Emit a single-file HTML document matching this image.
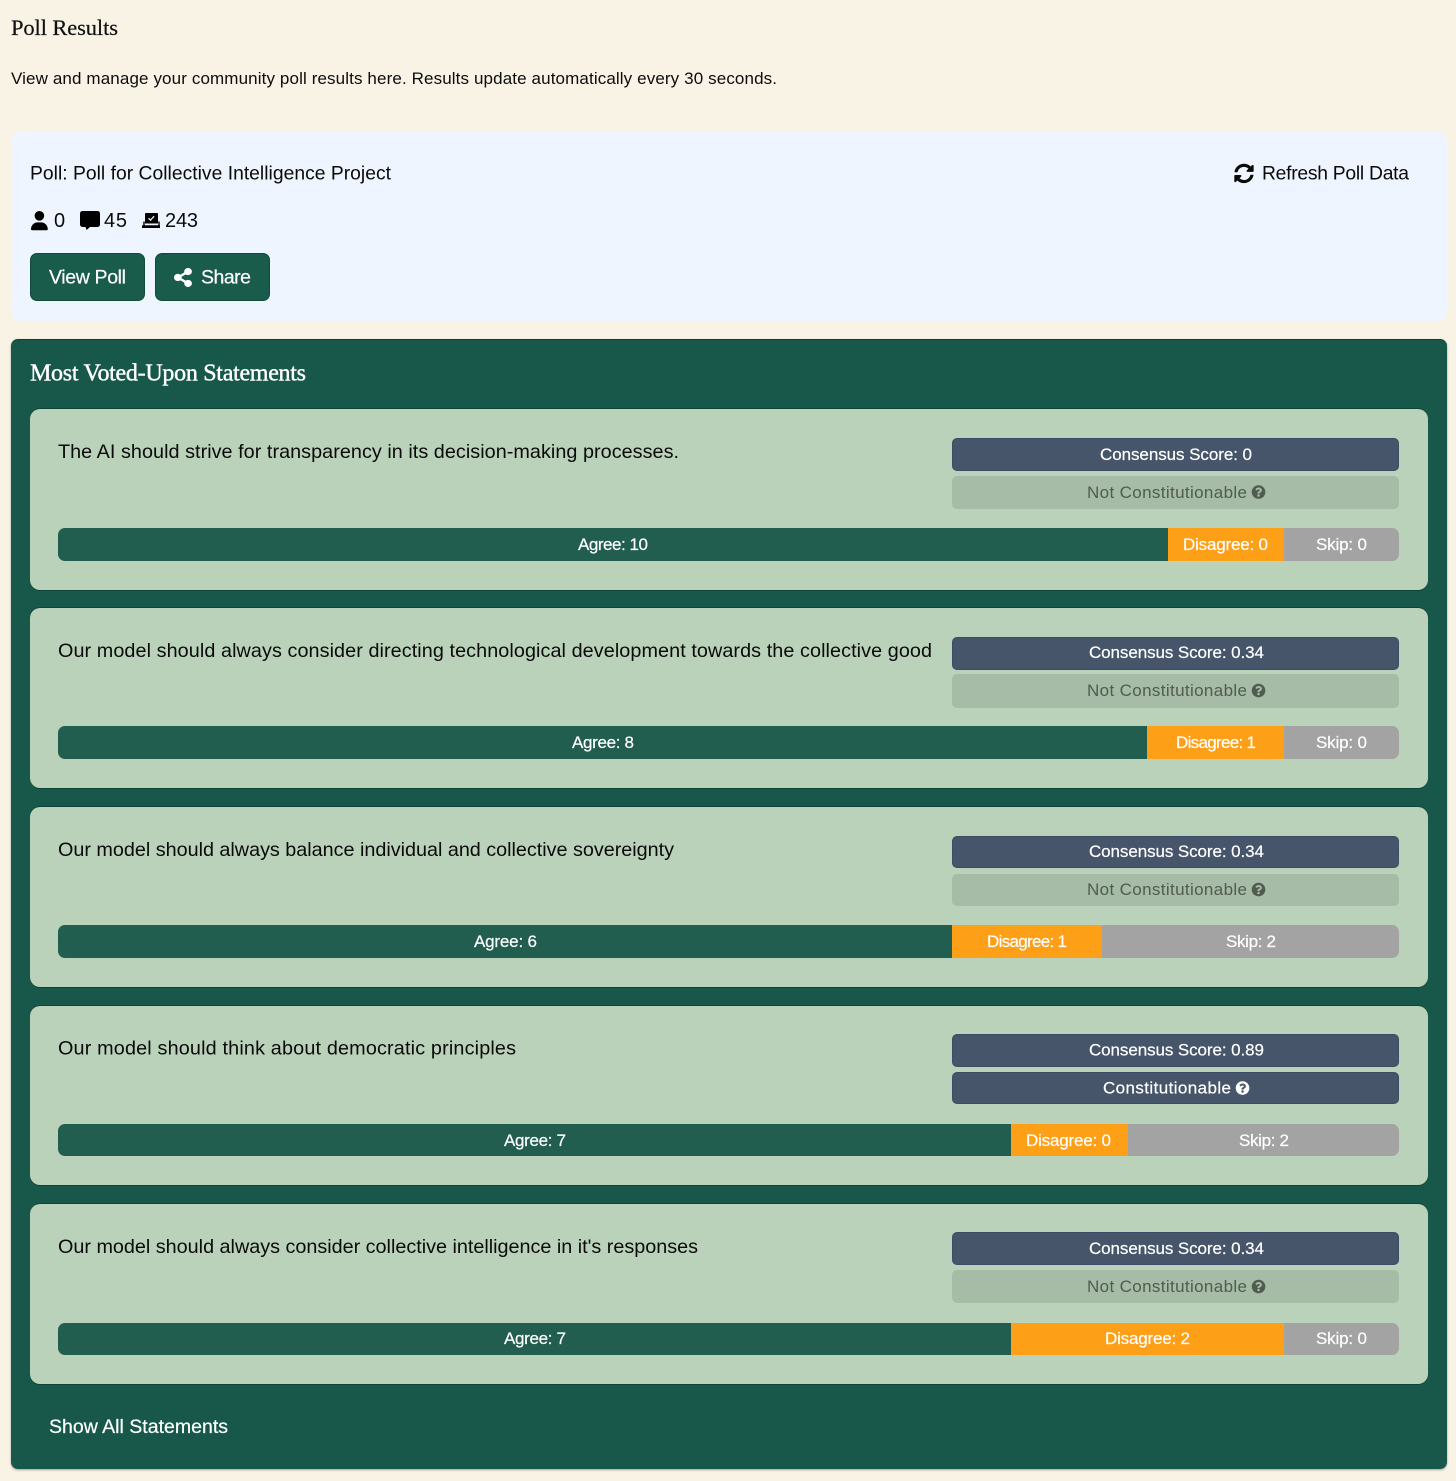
<!DOCTYPE html>
<html lang="en">
<head>
<meta charset="utf-8">
<title>Poll Results</title>
<style>
html,body{margin:0;padding:0;background:#f9f3e6;}
body{position:relative;width:1456px;height:1481px;overflow:hidden;font-family:"Liberation Sans",sans-serif;}
.b{position:absolute;box-sizing:border-box;}
.panel{left:11px;top:131px;width:1436px;height:190px;background:#eef5ff;border-radius:10px;}
.btn{top:253px;height:48px;background:#1a5c4c;border:1px solid #0f4a3a;border-radius:7px;}
.main{left:11px;top:339px;width:1436px;height:1130px;background:#18584a;border-radius:7px;box-shadow:0 1px 2px rgba(0,0,0,.35);border-top:1px solid #0d4035;}
.card{left:30px;width:1398px;background:#bad2b9;border-radius:10px;box-shadow:0 -1px 0 #0e4437,0 1px 0 #0e4437;}
.pill{left:952px;width:447px;background:#465569;border:1px solid #3d4c66;border-radius:5px;}
.off{background:#a6bca7;border-color:#a6bca7;}
.bar{left:58px;width:1341px;border-radius:7px;overflow:hidden;display:flex;}
.bar i{display:block;height:100%;}
.a{background:#225e50;}.d{background:#fe9f18;}.s{background:#a3a3a3;flex:1;}
svg.o{position:absolute;left:0;top:0;}
text{font-family:"Liberation Sans",sans-serif;}
.srf{font-family:"Liberation Serif",serif;}
.t17{font-size:17px;fill:#0c0c0c;}
.t19{font-size:19.3px;fill:#0a0a0a;}
.st{font-size:19.8px;fill:#0a0a0a;}
.num{font-size:20px;fill:#0a0a0a;}
.w{font-size:17px;fill:#fff;stroke:#fff;stroke-width:.2px;}
.m{font-size:17px;fill:#4f5c4f;}
.w19{font-size:19.5px;fill:#fff;stroke:#fff;stroke-width:.2px;}
</style>
</head>
<body>
<div class="b panel"></div>
<div class="b btn" style="left:30px;width:115px"></div>
<div class="b btn" style="left:155px;width:115px"></div>
<div class="b main"></div>

<div class="b card" style="top:409px;height:181px"></div>
<div class="b card" style="top:608px;height:180px"></div>
<div class="b card" style="top:807px;height:180px"></div>
<div class="b card" style="top:1006px;height:179px"></div>
<div class="b card" style="top:1204px;height:180px"></div>

<div class="b pill" style="top:438px;height:33px"></div>
<div class="b pill off" style="top:476px;height:33px"></div>
<div class="b bar" style="top:528px;height:33px"><i class="a" style="width:1110px"></i><i class="d" style="width:116px"></i><i class="s"></i></div>

<div class="b pill" style="top:637px;height:33px"></div>
<div class="b pill off" style="top:674px;height:34px"></div>
<div class="b bar" style="top:726px;height:33px"><i class="a" style="width:1089px"></i><i class="d" style="width:137px"></i><i class="s"></i></div>

<div class="b pill" style="top:836px;height:32px"></div>
<div class="b pill off" style="top:874px;height:32px"></div>
<div class="b bar" style="top:925px;height:33px"><i class="a" style="width:894px"></i><i class="d" style="width:150px"></i><i class="s"></i></div>

<div class="b pill" style="top:1034px;height:33px"></div>
<div class="b pill" style="top:1072px;height:32px"></div>
<div class="b bar" style="top:1124px;height:32px"><i class="a" style="width:953px"></i><i class="d" style="width:117px"></i><i class="s"></i></div>

<div class="b pill" style="top:1232px;height:33px"></div>
<div class="b pill off" style="top:1270px;height:33px"></div>
<div class="b bar" style="top:1323px;height:32px"><i class="a" style="width:953px"></i><i class="d" style="width:273px"></i><i class="s"></i></div>

<svg class="o" width="1456" height="1481" viewBox="0 0 1456 1481" xmlns="http://www.w3.org/2000/svg">
<defs>
<path id="q" d="M504 256c0 136.997-111.043 248-248 248S8 392.997 8 256C8 119.083 119.043 8 256 8s248 111.083 248 248zM262.655 90c-54.497 0-89.255 22.957-116.549 63.758-3.536 5.286-2.353 12.415 2.715 16.258l34.699 26.31c5.205 3.947 12.621 3.008 16.665-2.122 17.864-22.658 30.113-35.797 57.303-35.797 20.429 0 45.698 13.148 45.698 32.958 0 14.976-12.363 22.667-32.534 33.976C247.128 238.528 216 254.941 216 296v4c0 6.627 5.373 12 12 12h56c6.627 0 12-5.373 12-12v-1.333c0-28.462 83.186-29.647 83.186-106.667 0-58.002-60.165-102-116.531-102zM256 338c-25.365 0-46 20.635-46 46 0 25.364 20.635 46 46 46s46-20.636 46-46c0-25.365-20.635-46-46-46z"/>
</defs>

<text class="srf" x="11" y="35" font-size="22.500" fill="#111" stroke="#111" stroke-width=".2" textLength="107">Poll Results</text>
<text class="t17" x="11" y="84" textLength="766">View and manage your community poll results here. Results update automatically every 30 seconds.</text>

<text class="t19" x="30" y="179.500" textLength="361">Poll: Poll for Collective Intelligence Project</text>
<g transform="translate(1234 163.500) scale(.0390)"><path fill="#0a0a0a" d="M370.72 133.28C339.458 104.008 298.888 87.962 255.848 88c-77.458.068-144.328 53.178-162.791 126.85-1.344 5.363-6.122 9.15-11.651 9.15H24.103c-7.498 0-13.194-6.807-11.807-14.176C33.933 94.924 134.813 8 256 8c66.448 0 126.791 26.136 171.315 68.685L463.03 40.97C478.149 25.851 504 36.559 504 57.941V192c0 13.255-10.745 24-24 24H345.941c-21.382 0-32.09-25.851-16.971-40.971l41.75-41.749zM32 296h134.059c21.382 0 32.09 25.851 16.971 40.971l-41.75 41.75c31.262 29.273 71.835 45.319 114.876 45.28 77.418-.07 144.315-53.144 162.787-126.849 1.344-5.363 6.122-9.15 11.651-9.15h57.304c7.498 0 13.194 6.807 11.807 14.176C478.067 417.076 377.187 504 256 504c-66.448 0-126.791-26.136-171.315-68.685L48.97 471.03C33.851 486.149 8 475.441 8 454.059V320c0-13.255 10.745-24 24-24z"/></g>
<text class="t19" x="1262" y="179.500" textLength="147">Refresh Poll Data</text>

<g transform="translate(31 211) scale(.0375)"><path fill="#000" d="M224 256A128 128 0 1 0 224 0a128 128 0 1 0 0 256zm-45.700 48C79.800 304 0 383.800 0 482.300C0 498.700 13.300 512 29.700 512H418.300c16.400 0 29.700-13.300 29.700-29.700C448 383.800 368.200 304 269.700 304H178.300z"/></g>
<text class="num" x="54" y="227" textLength="12">0</text>
<path fill="#000" d="M82.500 211h15a2.500 2.500 0 0 1 2.500 2.500v11a2.500 2.500 0 0 1-2.500 2.500h-7.500l-3.500 3-1-3h-3a2.500 2.500 0 0 1-2.500-2.500v-11a2.500 2.500 0 0 1 2.500-2.500z"/>
<text class="num" x="104" y="227" textLength="23">45</text>
<path fill="#000" d="M146 213h11a1 1 0 0 1 1 1v9.500h-13v-9.500a1 1 0 0 1 1-1z"/>
<path fill="none" stroke="#eef5ff" stroke-width="1.300" d="M148.500 218.200l2 2 3.600-4"/>
<path fill="none" stroke="#000" stroke-width="1.400" d="M144 221.500v4M159 221.500v4"/>
<path fill="#000" d="M142 225.300h18v2.700h-18z"/>
<text class="num" x="165" y="227" textLength="33">243</text>

<text class="w19" x="49" y="283.500" textLength="77">View Poll</text>
<g transform="translate(174 268) scale(.04 .037)"><path fill="#fff" d="M352 320c-22.608 0-43.387 7.819-59.790 20.895l-102.486-64.054a96.551 96.551 0 0 0 0-41.683l102.486-64.054C308.613 184.181 329.392 192 352 192c53.019 0 96-42.981 96-96S405.019 0 352 0s-96 42.981-96 96c0 7.158.79 14.130 2.276 20.841L155.790 180.895C139.387 167.819 118.608 160 96 160c-53.019 0-96 42.981-96 96s42.981 96 96 96c22.608 0 43.387-7.819 59.790-20.895l102.486 64.054A96.301 96.301 0 0 0 256 416c0 53.019 42.981 96 96 96s96-42.981 96-96-42.981-96-96-96z"/></g>
<text class="w19" x="201" y="283.500" textLength="50">Share</text>

<text class="srf" x="30" y="380.500" font-size="24" fill="#fff" stroke="#fff" stroke-width=".4" textLength="276">Most Voted-Upon Statements</text>

<!-- Card 1 -->
<text class="st" x="58" y="458" textLength="621">The AI should strive for transparency in its decision-making processes.</text>
<text class="w" x="1100" y="460" textLength="152">Consensus Score: 0</text>
<text class="m" x="1087" y="498" textLength="160">Not Constitutionable</text>
<use href="#q" fill="#4f5c4f" transform="translate(1251.500 485) scale(.0275)"/>
<text class="w" x="578" y="550" textLength="70">Agree: 10</text>
<text class="w" x="1183" y="550" textLength="85">Disagree: 0</text>
<text class="w" x="1316" y="550" textLength="51">Skip: 0</text>

<!-- Card 2 -->
<text class="st" x="58" y="657" textLength="874">Our model should always consider directing technological development towards the collective good</text>
<text class="w" x="1089" y="658" textLength="175">Consensus Score: 0.34</text>
<text class="m" x="1087" y="696" textLength="160">Not Constitutionable</text>
<use href="#q" fill="#4f5c4f" transform="translate(1251.500 683.500) scale(.0275)"/>
<text class="w" x="572" y="748" textLength="62">Agree: 8</text>
<text class="w" x="1176" y="748" textLength="80">Disagree: 1</text>
<text class="w" x="1316" y="748" textLength="51">Skip: 0</text>

<!-- Card 3 -->
<text class="st" x="58" y="856" textLength="616">Our model should always balance individual and collective sovereignty</text>
<text class="w" x="1089" y="857" textLength="175">Consensus Score: 0.34</text>
<text class="m" x="1087" y="895" textLength="160">Not Constitutionable</text>
<use href="#q" fill="#4f5c4f" transform="translate(1251.500 882.500) scale(.0275)"/>
<text class="w" x="474" y="947" textLength="63">Agree: 6</text>
<text class="w" x="987" y="947" textLength="80">Disagree: 1</text>
<text class="w" x="1226" y="947" textLength="50">Skip: 2</text>

<!-- Card 4 -->
<text class="st" x="58" y="1054.500" textLength="458">Our model should think about democratic principles</text>
<text class="w" x="1089" y="1055.500" textLength="175">Consensus Score: 0.89</text>
<text class="w" x="1103" y="1093.500" textLength="128">Constitutionable</text>
<use href="#q" fill="#fff" transform="translate(1235.500 1081) scale(.0275)"/>
<text class="w" x="504" y="1146" textLength="62">Agree: 7</text>
<text class="w" x="1026" y="1146" textLength="85">Disagree: 0</text>
<text class="w" x="1239" y="1146" textLength="50">Skip: 2</text>

<!-- Card 5 -->
<text class="st" x="58" y="1253" textLength="640">Our model should always consider collective intelligence in it's responses</text>
<text class="w" x="1089" y="1254" textLength="175">Consensus Score: 0.34</text>
<text class="m" x="1087" y="1292" textLength="160">Not Constitutionable</text>
<use href="#q" fill="#4f5c4f" transform="translate(1251.500 1279.500) scale(.0275)"/>
<text class="w" x="504" y="1344" textLength="62">Agree: 7</text>
<text class="w" x="1105" y="1344" textLength="85">Disagree: 2</text>
<text class="w" x="1316" y="1344" textLength="51">Skip: 0</text>

<text class="w19" x="49" y="1433" textLength="179">Show All Statements</text>
</svg>
</body>
</html>
